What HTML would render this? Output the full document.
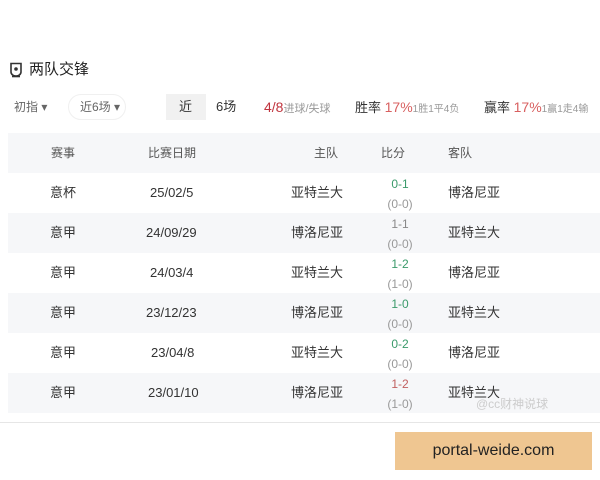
<!DOCTYPE html>
<html><head><meta charset="utf-8"><style>
*{margin:0;padding:0;box-sizing:border-box}
body{width:600px;height:480px;background:#fff;font-family:"Liberation Sans","Noto Sans CJK SC",sans-serif;color:#333;position:relative;overflow:hidden}
.a{position:absolute;white-space:nowrap;line-height:18px}
.row{position:absolute;left:8px;width:592px;height:40px;font-size:13px}
.row div{position:absolute;top:0;line-height:40px;white-space:nowrap}
.g{background:#f6f7f9}
.row .sc{left:366px;width:52px;text-align:center;top:2px;line-height:18px;font-size:12px}
.sc span{display:block;color:#999;margin-top:2px}
</style></head><body>
<svg class="a" style="left:9px;top:62px" width="14" height="16" viewBox="0 0 14 16"><path d="M2 1.5h10v8.5a5 4 0 0 1-10 0z" fill="none" stroke="#333" stroke-width="1.6"/><circle cx="7" cy="7" r="1.8" fill="#333"/><path d="M3 14.5h8" stroke="#333" stroke-width="1.6"/></svg>
<div class="a" style="left:29px;top:61px;font-size:15px;color:#222">两队交锋</div>
<div class="a" style="left:14px;top:98px;font-size:12px;color:#666">初指 ▾</div>
<div class="a" style="left:68px;top:94px;width:58px;height:26px;border-radius:13px;border:1px solid #f0f0f0"></div>
<div class="a" style="left:80px;top:98px;font-size:12px;color:#666">近6场 ▾</div>
<div class="a" style="left:166px;top:94px;width:40px;height:26px;background:#f1f1f1"></div>
<div class="a" style="left:179px;top:98px;font-size:13px">近</div>
<div class="a" style="left:216px;top:98px;font-size:13px">6场</div>
<div class="a" style="left:264px;top:98px;font-size:14px;color:#c0343e">4/8<span style="font-size:11px;color:#999">进球/失球</span></div>
<div class="a" style="left:355px;top:98px;font-size:13px;color:#333">胜率 <span style="font-size:14px;color:#d86060">17%</span><span style="font-size:10px;color:#999">1胜1平4负</span></div>
<div class="a" style="left:484px;top:98px;font-size:13px;color:#333">赢率 <span style="font-size:14px;color:#d86060">17%</span><span style="font-size:10px;color:#999">1赢1走4输</span></div>
<div class="row g" style="top:133px;color:#555;font-size:12px"><div style="left:43px">赛事</div><div style="left:140px">比赛日期</div><div style="left:306px">主队</div><div style="left:373px">比分</div><div style="left:440px">客队</div></div>
<div class="row" style="top:173px"><div style="left:42px">意杯</div><div style="left:142px">25/02/5</div><div style="left:283px">亚特兰大</div><div class="sc" style="color:#3a9a6a">0-1<span>(0-0)</span></div><div style="left:440px">博洛尼亚</div></div>
<div class="row g" style="top:213px"><div style="left:42px">意甲</div><div style="left:138px">24/09/29</div><div style="left:283px">博洛尼亚</div><div class="sc" style="color:#888">1-1<span>(0-0)</span></div><div style="left:440px">亚特兰大</div></div>
<div class="row" style="top:253px"><div style="left:42px">意甲</div><div style="left:142px">24/03/4</div><div style="left:283px">亚特兰大</div><div class="sc" style="color:#3a9a6a">1-2<span>(1-0)</span></div><div style="left:440px">博洛尼亚</div></div>
<div class="row g" style="top:293px"><div style="left:42px">意甲</div><div style="left:138px">23/12/23</div><div style="left:283px">博洛尼亚</div><div class="sc" style="color:#3a9a6a">1-0<span>(0-0)</span></div><div style="left:440px">亚特兰大</div></div>
<div class="row" style="top:333px"><div style="left:42px">意甲</div><div style="left:143px">23/04/8</div><div style="left:283px">亚特兰大</div><div class="sc" style="color:#3a9a6a">0-2<span>(0-0)</span></div><div style="left:440px">博洛尼亚</div></div>
<div class="row g" style="top:373px"><div style="left:42px">意甲</div><div style="left:140px">23/01/10</div><div style="left:283px">博洛尼亚</div><div class="sc" style="color:#c06060">1-2<span>(1-0)</span></div><div style="left:440px">亚特兰大</div></div>
<div class="a" style="left:476px;top:395px;font-size:12px;color:#ccc">@cc财神说球</div>
<div class="a" style="left:0;top:422px;width:600px;height:1px;background:#e6e6e6"></div>
<div class="a" style="left:395px;top:432px;width:197px;height:38px;background:#efc691;font-size:16px;color:#222;text-align:center;line-height:38px">portal-weide.com</div>
</body></html>
